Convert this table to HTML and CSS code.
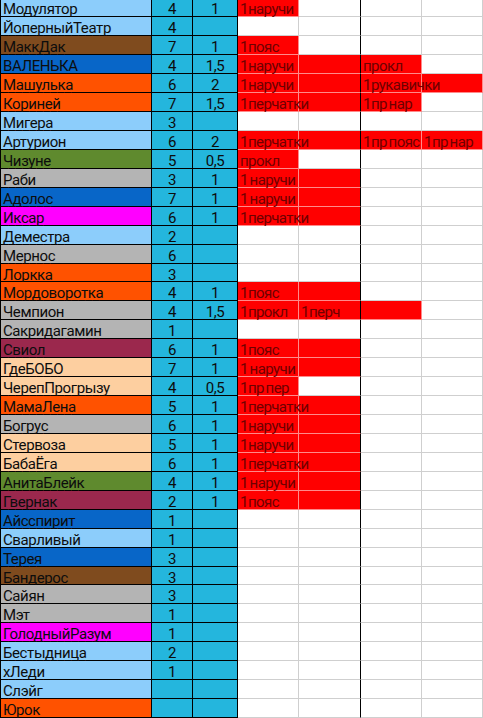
FILE: index.html
```html
<!DOCTYPE html>
<html lang="ru">
<head>
<meta charset="utf-8">
<title>Таблица</title>
<link rel="stylesheet" href="styles.css">
</head>
<body>
<div class="sheet" id="sheet"></div>
<script src="app.js"></script>
</body>
</html>
```

FILE: app.js
```js
const rows = [
  ["Модулятор","lb",0,"4","1",["1наручи",null,null,null]],
  ["ЙоперныйТеатр","lb",1,"4","",[null,null,null,null]],
  ["МаккДак","br",1,"7","1",["1пояс",null,null,null]],
  ["ВАЛЕНЬКА","db",0,"4","1,5",["1наручи","","прокл",null]],
  ["Машулька","or",1,"6","2",["1наручи","","1рукавички",""]],
  ["Кориней","or",1,"7","1,5",["1перчатки","","1пр нар",null]],
  ["Мигера","lb",1,"3","",[null,null,null,null]],
  ["Артурион","lb",1,"6","2",["1перчатки","","1пр пояс","1пр нар"]],
  ["Чизуне","ol",1,"5","0,5",["прокл",null,null,null]],
  ["Раби","gr",1,"3","1",["1 наручи","",null,null]],
  ["Адолос","db",1,"7","1",["1 наручи","",null,null]],
  ["Иксар","mg",1,"6","1",["1перчатки","",null,null]],
  ["Деместра","lb",1,"2","",[null,null,null,null]],
  ["Мернос","gr",1,"6","",[null,null,null,null]],
  ["Лоркка","or",1,"3","",[null,null,null,null]],
  ["Мордоворотка","or",1,"4","1",["1пояс","",null,null]],
  ["Чемпион","gr",0,"4","1,5",["1прокл","1перч","",null]],
  ["Сакридагамин","gr",1,"1","",[null,null,null,null]],
  ["Свиол","mr",1,"6","1",["1пояс","",null,null]],
  ["ГдеБОБО","pc",1,"7","1",["1 наручи","",null,null]],
  ["ЧерепПрогрызу","pc",1,"4","0,5",["1пр пер",null,null,null]],
  ["МамаЛена","or",1,"5","1",["1перчатки","",null,null]],
  ["Богрус","gr",1,"6","1",["1наручи","",null,null]],
  ["Стервоза","pc",0,"5","1",["1наручи","",null,null]],
  ["БабаЁга","pc",1,"6","1",["1перчатки","",null,null]],
  ["АнитаБлейк","ol",1,"4","1",["1 наручи","",null,null]],
  ["Гвернак","mr",1,"2","1",["1пояс","",null,null]],
  ["Айсспирит","db",1,"1","",[null,null,null,null]],
  ["Сварливый","lb",0,"1","",[null,null,null,null]],
  ["Терея","db",1,"3","",[null,null,null,null]],
  ["Бандерос","br",1,"3","",[null,null,null,null]],
  ["Сайян","gr",1,"3","",[null,null,null,null]],
  ["Мэт","gr",1,"1","",[null,null,null,null]],
  ["ГолодныйРазум","mg",1,"1","",[null,null,null,null]],
  ["Бестыдница","lb",1,"2","",[null,null,null,null]],
  ["хЛеди","lb",1,"1","",[null,null,null,null]],
  ["Слэйг","lb",1,"","",[null,null,null,null]],
  ["Юрок","or",0,"","",[null,null,null,null]]
];
const sheet = document.getElementById("sheet");
function cell(cls, text) {
  const d = document.createElement("div");
  d.className = "cell " + cls;
  if (text) {
    const s = document.createElement("span");
    s.textContent = text;
    d.appendChild(s);
  }
  sheet.appendChild(d);
  return d;
}
rows.forEach(r => {
  const [name, col, sp, a, b, ext] = r;
  const n = cell("name " + col, name);
  if (sp) n.firstChild.classList.add("sp");
  cell("num", a);
  cell("num c3", b);
  ext.forEach((v, i) => {
    const cls = ["ea", "eb", "ec", "ed"][i];
    cell("ext " + cls + (v !== null ? " red" : ""), v || "");
  });
});
```

FILE: styles.css
```css
html, body {
  margin: 0;
  padding: 0;
  background: #ffffff;
}
body {
  font-family: Roboto, "Liberation Sans", Arial, sans-serif;
  font-size: 15px;
  letter-spacing: -0.4px;
  color: #0d0d0d;
  overflow: hidden;
}
.sheet {
  display: grid;
  grid-template-columns: 152px 41px 45px 61px 62px 61px 61px;
  grid-auto-rows: 18.94px;
  margin-top: -1.6px;
  width: 483px;
}
.cell {
  box-sizing: border-box;
  border-right: 1px solid #000;
  border-bottom: 1px solid #000;
  padding-top: 5px;
  line-height: 13px;
  white-space: nowrap;
  overflow: visible;
  position: relative;
}
.name {
  border-left: 1px solid #000;
  padding-left: 2px;
}
.sp {
  text-decoration: underline wavy #e02020;
  text-decoration-thickness: 1px;
  text-underline-offset: 2px;
  text-decoration-skip-ink: none;
}
.lb { background: #8ccdfb; }
.br { background: #7f4b1e; }
.db { background: #0866c8; }
.or { background: #ff5200; }
.ol { background: #5f8a2e; }
.gr { background: #b4b4b4; }
.mg { background: #ff00ff; }
.mr { background: #9b284d; }
.pc { background: #fdcfa0; }
.num {
  background: #24b6dd;
  text-align: center;
}
.ext {
  background: #ffffff;
  border-right-color: #cfcfcf;
  border-bottom-color: #cfcfcf;
  padding-left: 2px;
  color: #6e0000;
  letter-spacing: -0.55px;
  word-spacing: -1.5px;
}
.ext.eb {
  border-right-color: #000;
}
.ext.red {
  background: #ff0000;
  border-bottom-color: #ff8a8a;
  border-right-color: #ff8a8a;
}
.ext.eb.red {
  border-right-color: #000;
}
.ext span {
  position: relative;
  z-index: 1;
}
```
